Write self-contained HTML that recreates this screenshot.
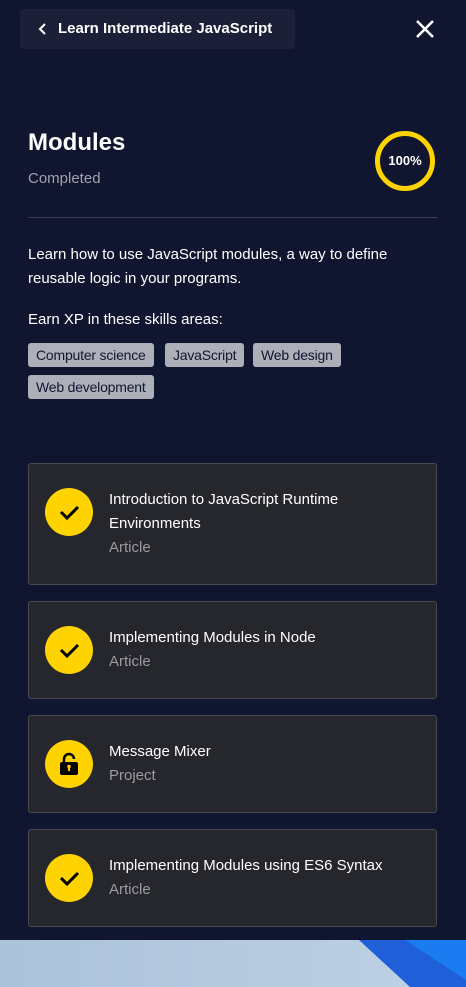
<!DOCTYPE html>
<html><head><style>
*{margin:0;padding:0;box-sizing:border-box}
body{width:466px;height:987px;background:#10162f;font-family:"Liberation Sans",sans-serif;color:#fff;position:relative;overflow:hidden}
.abs{position:absolute}
.back{left:20px;top:9px;width:275px;height:40px;background:#1b2038;border-radius:4px;font-weight:bold;font-size:15px;line-height:40px;padding-left:38px}
.tag{position:absolute;height:24px;background:#aeb0b9;color:#10162f;border-radius:3px;font-size:14px;line-height:24px;padding:0 8px;letter-spacing:-0.2px}
.card{position:absolute;left:28px;width:409px;background:#26272c;border:1px solid #4a4b52;border-radius:3px}
.ic{position:absolute;left:16px;width:48px;height:48px;border-radius:50%;background:#ffd300}
.t{position:absolute;left:80px;font-size:15px;line-height:24px;color:#fff}
.s{color:#9a9ba1;font-size:15px}
</style></head><body>
<div class="abs back">Learn Intermediate JavaScript
<svg class="abs" style="left:18px;top:13px" width="10" height="14" viewBox="0 0 10 14"><path d="M7 2 L2 7 L7 12" stroke="#fff" stroke-width="2" fill="none"/></svg></div>
<svg class="abs" style="left:415px;top:19px" width="20" height="20" viewBox="0 0 20 20"><path d="M2 2L18 18M18 2L2 18" stroke="#fff" stroke-width="2.6"/></svg>
<div class="abs" style="left:28px;top:129px;font-size:24px;font-weight:bold">Modules</div>
<div class="abs" style="left:28px;top:170px;font-size:15px;color:#a0a2aa">Completed</div>
<div class="abs" style="left:375px;top:131px;width:60px;height:60px;border:5px solid #ffd300;border-radius:50%;text-align:center;line-height:50px;font-size:13px;font-weight:bold">100%</div>
<div class="abs" style="left:28px;top:217px;width:409px;height:1px;background:#3a3f55"></div>
<div class="abs" style="left:28px;top:243px;width:400px;font-size:15px;line-height:24px">Learn how to use JavaScript modules, a way to define reusable logic in your programs.</div>
<div class="abs" style="left:28px;top:309px;font-size:15px;line-height:22px">Earn XP in these skills areas:</div>
<div class="tag" style="left:28px;top:343px">Computer science</div>
<div class="tag" style="left:165px;top:343px">JavaScript</div>
<div class="tag" style="left:253px;top:343px">Web design</div>
<div class="tag" style="left:28px;top:375px">Web development</div>

<div class="card" style="top:463px;height:122px"><div class="ic" style="top:24px"><svg width="48" height="48"><path d="M16 24l6 6 11-11" stroke="#000" stroke-width="3" fill="none"/></svg></div>
<div class="t" style="top:24px">Introduction to JavaScript Runtime<br>Environments<br><span class="s">Article</span></div></div>

<div class="card" style="top:601px;height:98px"><div class="ic" style="top:24px"><svg width="48" height="48"><path d="M16 24l6 6 11-11" stroke="#000" stroke-width="3" fill="none"/></svg></div>
<div class="t" style="top:24px">Implementing Modules in Node<br><span class="s">Article</span></div></div>

<div class="card" style="top:715px;height:98px"><div class="ic" style="top:24px"><svg width="48" height="48"><path d="M19 22v-3a5 5 0 0 1 10 0" stroke="#000" stroke-width="2.5" fill="none"/><rect x="15" y="22" width="18" height="13" rx="2" fill="#000"/><rect x="23" y="26" width="2" height="5" fill="#ffd300"/><circle cx="24" cy="26.5" r="1.8" fill="#ffd300"/></svg></div>
<div class="t" style="top:24px">Message Mixer<br><span class="s">Project</span></div></div>

<div class="card" style="top:829px;height:98px"><div class="ic" style="top:24px"><svg width="48" height="48"><path d="M16 24l6 6 11-11" stroke="#000" stroke-width="3" fill="none"/></svg></div>
<div class="t" style="top:24px">Implementing Modules using ES6 Syntax<br><span class="s">Article</span></div></div>

<div class="abs" style="left:0;top:940px;width:466px;height:47px;background:linear-gradient(90deg,#abc2d9,#bfd1e5)"></div>
<svg class="abs" style="left:0;top:940px" width="466" height="47"><polygon points="359,0 466,0 466,47 410,47" fill="#1f5fd8"/><polygon points="405,0 466,0 466,40" fill="#1a7cf0"/></svg>
</body></html>
